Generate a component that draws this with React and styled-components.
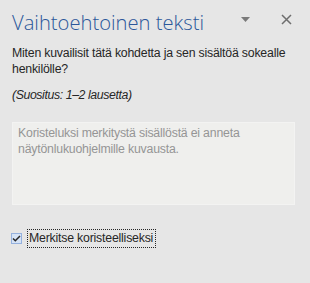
import styled, { createGlobalStyle } from "styled-components";

const GlobalStyle = createGlobalStyle`
  html, body {
    margin: 0;
    padding: 0;
    background: #e6e6e6;
  }
  body {
    font-family: "Liberation Sans", Arial, sans-serif;
  }
`;

function App() {
  return (
    <>
      <GlobalStyle />
      <Pane>
        <Header>
          <Title>Vaihtoehtoinen teksti</Title>
          <HeaderButtons>
            <IconButton aria-label="Valikko">
              <svg width="9" height="5" viewBox="0 0 9 5">
                <path d="M0 0 H9 L4.5 5 Z" fill="#7a7a7a" />
              </svg>
            </IconButton>
            <IconButton aria-label="Sulje">
              <svg width="11" height="11" viewBox="0 0 11 11">
                <path
                  d="M1 1 L10 10 M10 1 L1 10"
                  stroke="#6e6e6e"
                  strokeWidth="1.5"
                />
              </svg>
            </IconButton>
          </HeaderButtons>
        </Header>
        <Question>
          Miten kuvailisit tätä kohdetta ja sen sisältöä sokealle henkilölle?
        </Question>
        <Hint>(Suositus: 1–2 lausetta)</Hint>
        <TextArea
          disabled
          placeholder="Koristeluksi merkitystä sisällöstä ei anneta näytönlukuohjelmille kuvausta."
        />
        <CheckRow>
          <CheckBox>
            <svg width="9" height="7" viewBox="0 0 9 7">
              <path
                d="M1 3.5 L3.3 5.8 L8 1"
                stroke="#262626"
                strokeWidth="1.5"
                fill="none"
              />
            </svg>
          </CheckBox>
          <CheckLabel>Merkitse koristeelliseksi</CheckLabel>
        </CheckRow>
      </Pane>
    </>
  );
}

export default App;

const Pane = styled.div`
  width: 310px;
  height: 283px;
  box-sizing: border-box;
  padding: 6px 18px 0 12px;
  display: flex;
  flex-direction: column;
`;

const Header = styled.div`
  display: flex;
  align-items: flex-start;
  justify-content: space-between;
  height: 39px;
`;

const Title = styled.h1`
  margin: 3px 0 0;
  font-family: "Open Sans", sans-serif;
  font-size: 20.2px;
  line-height: 27px;
  font-weight: 300;
  color: #2b579a;
`;

const HeaderButtons = styled.div`
  display: flex;
  align-items: center;
  gap: 31px;
  height: 11px;
  margin-top: 8px;
`;

const IconButton = styled.span`
  display: flex;
  align-items: center;
  justify-content: center;
`;

const Question = styled.p`
  margin: 0;
  font-size: 12.3px;
  line-height: 16px;
  letter-spacing: -0.2px;
  color: #262626;
`;

const Hint = styled.p`
  margin: 10px 0 0;
  font-size: 12.3px;
  line-height: 16px;
  letter-spacing: -0.4px;
  font-style: italic;
  color: #262626;
`;

const TextArea = styled.textarea`
  margin-top: 19px;
  width: 283px;
  height: 83px;
  box-sizing: border-box;
  padding: 2px 5px;
  resize: none;
  background: #efefed;
  border: 1px solid #f3f3f2;
  font-family: inherit;
  font-size: 12.3px;
  line-height: 16px;
  letter-spacing: -0.2px;
  outline: none;

  &::placeholder {
    color: #959595;
  }
`;

const CheckRow = styled.div`
  display: flex;
  align-items: center;
  gap: 6px;
  margin: 25px 0 0 -1px;
`;

const CheckBox = styled.span`
  width: 11px;
  height: 11px;
  box-sizing: border-box;
  border: 1px solid #95b1de;
  background: #d5e3f6;
  display: flex;
  align-items: center;
  justify-content: center;
`;

const CheckLabel = styled.span`
  font-size: 12.3px;
  line-height: 17px;
  letter-spacing: -0.2px;
  padding: 0 2px 0 1px;
  color: #262626;
  outline: 1px dotted #262626;
`;
